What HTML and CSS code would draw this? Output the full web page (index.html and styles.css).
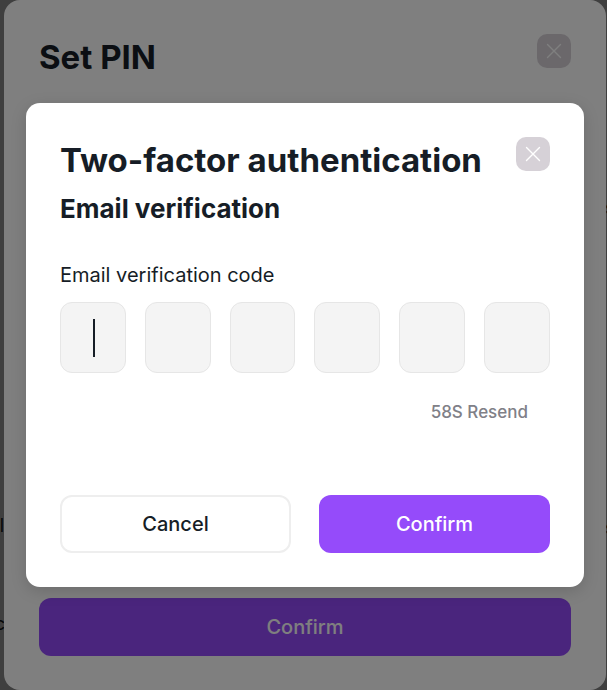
FILE: index.html
```html
<!DOCTYPE html>
<html lang="en">
<head>
  <meta charset="UTF-8" />
  <meta name="viewport" content="width=device-width, initial-scale=1.0"/>
  <title>Set PIN</title>
  <link rel="stylesheet" href="styles.css">
</head>
<body>
  <div class="backdrop" aria-hidden="true">
    <span class="edge edge-l1">ll</span>
    <span class="edge edge-l2">c</span>
    <span class="edge edge-r1">s</span>
    <span class="edge edge-r2">s</span>
  </div>

  <div class="pin-layer">
    <section class="pin-modal">
      <header class="modal-header">
        <h1 class="title">Set PIN</h1>
        <button type="button" class="close" aria-label="Close">
          <svg viewBox="0 0 34 34" width="34" height="34"><path d="M10.5 10.5l13 13M23.5 10.5l-13 13"/></svg>
        </button>
      </header>
      <button type="button" class="btn btn-primary">Confirm</button>
    </section>
  </div>

  <div class="overlay">
    <form class="modal" role="dialog" aria-labelledby="auth-title">
      <header class="modal-header">
        <h1 class="title" id="auth-title">Two-factor authentication</h1>
        <button type="button" class="close" aria-label="Close">
          <svg viewBox="0 0 34 34" width="34" height="34"><path d="M10.5 10.5l13 13M23.5 10.5l-13 13"/></svg>
        </button>
      </header>
      <h2 class="subtitle">Email verification</h2>

      <label class="label" for="code-1">Email verification code</label>
      <div class="code">
        <div class="cell active"><input type="text" id="code-1" maxlength="1" inputmode="numeric"></div>
        <div class="cell"><input type="text" maxlength="1" inputmode="numeric" aria-label="Digit 2"></div>
        <div class="cell"><input type="text" maxlength="1" inputmode="numeric" aria-label="Digit 3"></div>
        <div class="cell"><input type="text" maxlength="1" inputmode="numeric" aria-label="Digit 4"></div>
        <div class="cell"><input type="text" maxlength="1" inputmode="numeric" aria-label="Digit 5"></div>
        <div class="cell"><input type="text" maxlength="1" inputmode="numeric" aria-label="Digit 6"></div>
      </div>
      <button type="button" class="resend">58S Resend</button>

      <div class="actions">
        <button type="button" class="btn btn-outline">Cancel</button>
        <button type="submit" class="btn btn-primary">Confirm</button>
      </div>
    </form>
  </div>
</body>
</html>
```
FILE: styles.css
```css
* {
  box-sizing: border-box;
}
body {
  margin: 0;
  min-height: 100vh;
  background: #fff;
  color: #161d26;
  font-family: Inter, 'Liberation Sans', sans-serif;
  position: relative;
  overflow: hidden;
}
h1, h2 {
  margin: 0;
}
button, input {
  font-family: inherit;
  color: inherit;
}

/* page content peeking out beside the dialogs */
.backdrop {
  position: absolute;
  inset: 0;
  overflow: hidden;
}
.edge {
  position: absolute;
  font-size: 18px;
  line-height: 24px;
}
.edge-l1 {
  right: calc(100% - 4px);
  top: 514px;
}
.edge-l2 {
  right: calc(100% - 5px);
  top: 612px;
}
.edge-r1 {
  left: calc(100% - 2px);
  top: 196px;
}
.edge-r2 {
  left: calc(100% - 2px);
  top: 516px;
}

.pin-layer {
  position: relative;
  display: flex;
  min-height: 100vh;
  padding: 0 1px 0 4px;
  background: rgba(0, 0, 0, 0.5);
}
.pin-modal {
  flex: 1;
  display: flex;
  flex-direction: column;
  justify-content: space-between;
  padding: 34px 35px;
  background: #fff;
  border-radius: 16px;
}
.overlay {
  position: absolute;
  inset: 0;
  display: flex;
  align-items: center;
  padding: 0 23px 0 26px;
  background: rgba(0, 0, 0, 0.5);
}
.modal {
  flex: 1;
  display: flex;
  flex-direction: column;
  padding: 34px;
  background: #fff;
  border-radius: 14px;
  box-shadow: 0 4px 16px rgba(0, 0, 0, 0.15);
}

.modal-header {
  display: flex;
  justify-content: space-between;
  align-items: flex-start;
}
.title {
  font-size: 33px;
  font-weight: 700;
  line-height: 46px;
}
.close {
  width: 34px;
  height: 34px;
  padding: 0;
  border: none;
  border-radius: 10px;
  background: #d6d1d7;
  cursor: pointer;
}
.close svg {
  display: block;
  fill: none;
  stroke: #fff;
  stroke-width: 1.4;
  stroke-linecap: round;
}
.subtitle {
  margin-top: 8px;
  font-size: 26px;
  font-weight: 700;
  line-height: 36px;
}
.label {
  margin-top: 34px;
  font-size: 20px;
  line-height: 28px;
}

.code {
  display: flex;
  gap: 19px;
  margin-top: 13px;
}
.cell {
  flex: 1;
  position: relative;
}
.cell input {
  display: block;
  width: 100%;
  height: 71px;
  padding: 0;
  border: 1px solid #e6e6e6;
  border-radius: 12px;
  background: #f4f4f4;
  font-size: 32px;
  text-align: center;
  outline: none;
}
/* caret of the current cell */
.active::after {
  content: '';
  position: absolute;
  top: 17px;
  left: 50%;
  width: 2px;
  height: 38px;
  background: #161d26;
}
.resend {
  align-self: flex-end;
  margin: 27px 22px 0 0;
  padding: 0;
  border: none;
  background: none;
  color: #808087;
  font-size: 17px;
  font-weight: 500;
  line-height: 24px;
}

.actions {
  display: grid;
  grid-template-columns: 1fr 1fr;
  gap: 28px;
  margin-top: 71px;
}
.btn {
  height: 58px;
  padding: 0 16px;
  border: none;
  border-radius: 12px;
  font-size: 20px;
  font-weight: 500;
  cursor: pointer;
}
.btn-primary {
  background: #954bfa;
  color: #fff;
}
.btn-outline {
  border: 2px solid #eee;
  background: #fff;
}
```
